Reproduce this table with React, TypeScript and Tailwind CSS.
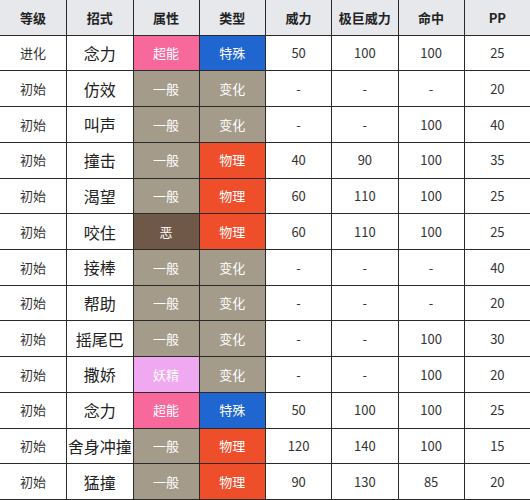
import React from "react";

type Move = {
  level: string;
  name: string;
  type: string;
  cat: string;
  power: string;
  max: string;
  acc: string;
  pp: string;
};

const TYPE_BG: Record<string, string> = {
  超能: "bg-[#f7699b]",
  一般: "bg-[#a59b8a]",
  恶: "bg-[#705848]",
  妖精: "bg-[#f0a8f0]",
};

const CAT_BG: Record<string, string> = {
  特殊: "bg-[#1f66d0]",
  变化: "bg-[#a59b8a]",
  物理: "bg-[#ef4e2b]",
};

const moves: Move[] = [
  { level: "进化", name: "念力", type: "超能", cat: "特殊", power: "50", max: "100", acc: "100", pp: "25" },
  { level: "初始", name: "仿效", type: "一般", cat: "变化", power: "-", max: "-", acc: "-", pp: "20" },
  { level: "初始", name: "叫声", type: "一般", cat: "变化", power: "-", max: "-", acc: "100", pp: "40" },
  { level: "初始", name: "撞击", type: "一般", cat: "物理", power: "40", max: "90", acc: "100", pp: "35" },
  { level: "初始", name: "渴望", type: "一般", cat: "物理", power: "60", max: "110", acc: "100", pp: "25" },
  { level: "初始", name: "咬住", type: "恶", cat: "物理", power: "60", max: "110", acc: "100", pp: "25" },
  { level: "初始", name: "接棒", type: "一般", cat: "变化", power: "-", max: "-", acc: "-", pp: "40" },
  { level: "初始", name: "帮助", type: "一般", cat: "变化", power: "-", max: "-", acc: "-", pp: "20" },
  { level: "初始", name: "摇尾巴", type: "一般", cat: "变化", power: "-", max: "-", acc: "100", pp: "30" },
  { level: "初始", name: "撒娇", type: "妖精", cat: "变化", power: "-", max: "-", acc: "100", pp: "20" },
  { level: "初始", name: "念力", type: "超能", cat: "特殊", power: "50", max: "100", acc: "100", pp: "25" },
  { level: "初始", name: "舍身冲撞", type: "一般", cat: "物理", power: "120", max: "140", acc: "100", pp: "15" },
  { level: "初始", name: "猛撞", type: "一般", cat: "物理", power: "90", max: "130", acc: "85", pp: "20" },
];

const headers = ["等级", "招式", "属性", "类型", "威力", "极巨威力", "命中", "PP"];

const font = { fontFamily: '"Noto Sans CJK SC", "Noto Sans", sans-serif' };

const cell = "flex items-center justify-center border-b border-[#2a2a2a]";

export default function App() {
  return (
    <div className="w-[530px] h-[500px] bg-white overflow-hidden" style={font}>
      <div className="grid grid-cols-8 grid-rows-14 h-[500px]">
        {headers.map((h, i) => (
          <div
            key={h}
            className={`${cell} bg-[#e6e8ec] text-[13px] font-bold text-[#222] ${i > 0 ? "border-l" : ""}`}
          >
            {h}
          </div>
        ))}
        {moves.map((m, r) => (
          <React.Fragment key={r}>
            <div className={`${cell} text-[13px] text-[#333]`}>{m.level}</div>
            <div className={`${cell} border-l text-[16px] text-[#222]`}>{m.name}</div>
            <div className={`${cell} border-l text-[13px] text-white ${TYPE_BG[m.type]}`}>{m.type}</div>
            <div className={`${cell} border-l text-[13px] text-white ${CAT_BG[m.cat]}`}>{m.cat}</div>
            <div className={`${cell} border-l text-[13px] text-[#333]`}>{m.power}</div>
            <div className={`${cell} border-l text-[13px] text-[#333]`}>{m.max}</div>
            <div className={`${cell} border-l text-[13px] text-[#333]`}>{m.acc}</div>
            <div className={`${cell} border-l text-[13px] text-[#333]`}>{m.pp}</div>
          </React.Fragment>
        ))}
      </div>
    </div>
  );
}
